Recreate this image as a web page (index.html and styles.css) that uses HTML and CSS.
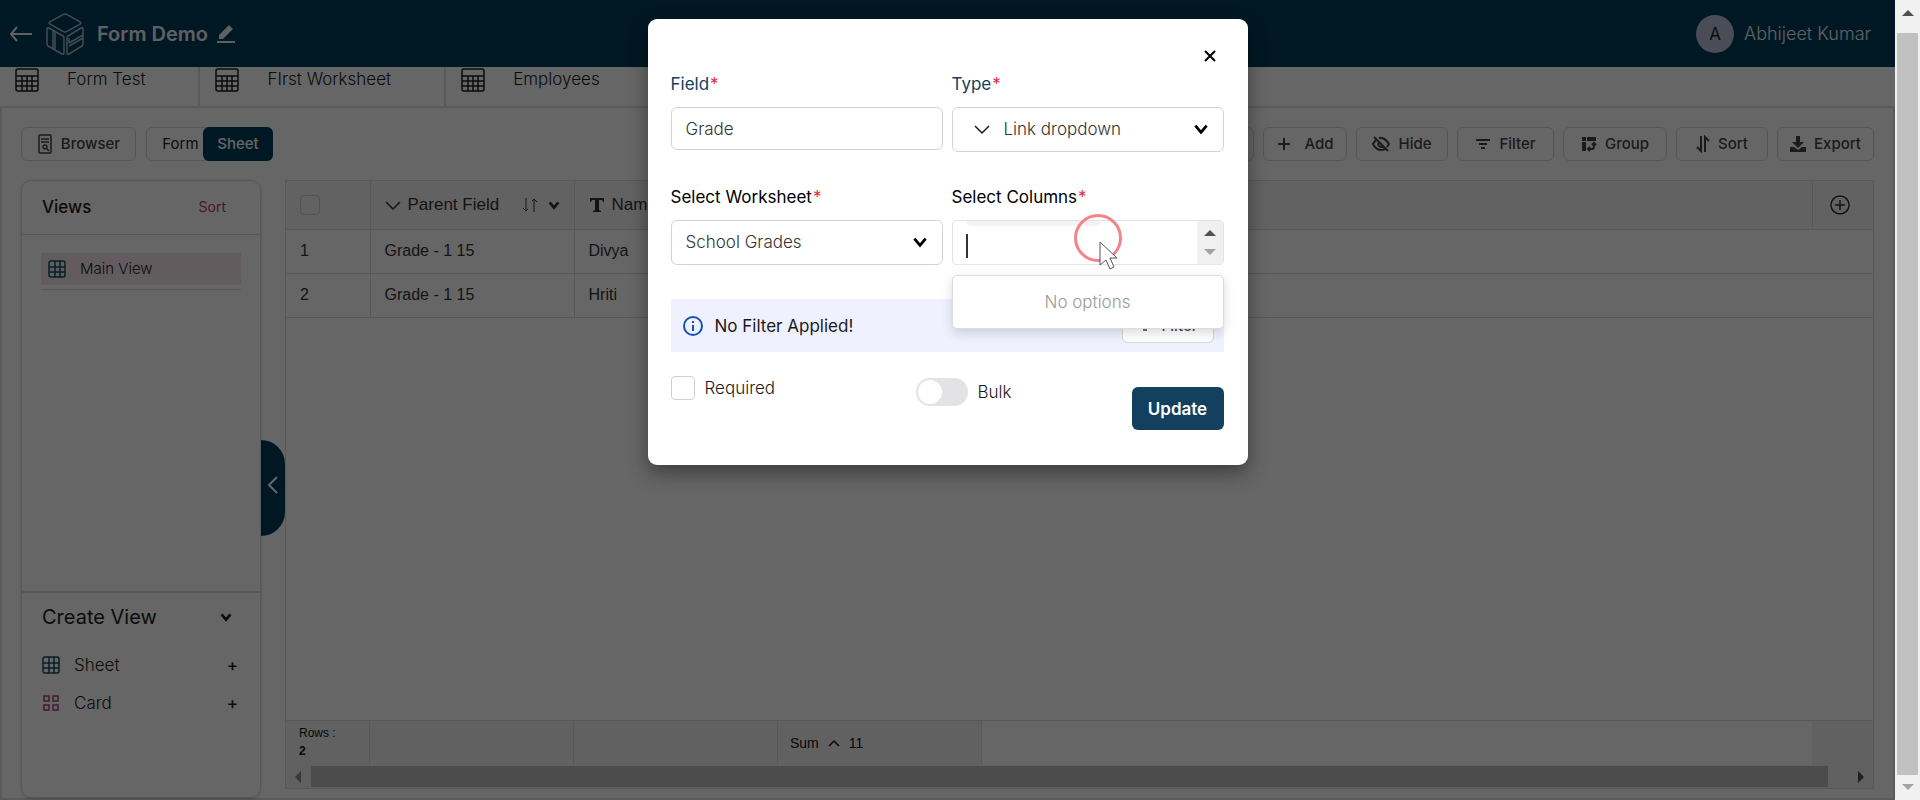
FILE: index.html
```html
<!DOCTYPE html>
<html lang="en">
<head>
  <meta charset="utf-8">
  <title>Form Demo</title>
  <link rel="stylesheet" href="styles.css">
</head>
<body>
  <!-- shared icons -->
  <svg class="sprite" aria-hidden="true">
    <symbol id="i-table" viewBox="0 0 24 24"><path d="M3 1h18a2 2 0 0 1 2 2v18a2 2 0 0 1-2 2H3a2 2 0 0 1-2-2V3a2 2 0 0 1 2-2zM1 8h22M1 13h22M1 18h22M7 8v15M12 8v15M17 8v15"/></symbol>
    <symbol id="i-grid" viewBox="0 0 18 18"><path d="M3 1h12a2 2 0 0 1 2 2v12a2 2 0 0 1-2 2H3a2 2 0 0 1-2-2V3a2 2 0 0 1 2-2zM1 7h16M1 12h16M7 1v16M12 1v16"/></symbol>
    <symbol id="i-chev" viewBox="0 0 16 16"><path d="M3 5l5 6 5-6"/></symbol>
    <symbol id="i-wide" viewBox="0 0 16 16"><path d="M1 5l7 7 7-7"/></symbol>
    <symbol id="i-filter" viewBox="0 0 16 16"><path d="M1 4h14M4 8h8M6 12h4"/></symbol>
  </svg>

  <div class="window">
    <div class="page">
      <header class="topbar">
        <button class="icon-btn" aria-label="Back"><svg width="24" height="20" viewBox="0 0 24 20"><path d="M8 3l-6 7 6 7M2 10h21"/></svg></button>
        <svg class="logo" width="40" height="44" viewBox="0 0 40 44"><path d="M20 2q1 0 2 .6l13 7.200q2 1.200 0 2.400l-13 7.200q-2 1-4 0L5 12.200q-2-1.200 0-2.400l13-7.200q1-.6 2-.6zM4 16l14 8q1 .6 1 2v15q0 2-2 1L3 34q-1-.6-1-2V17q0-2 2-1zM8 18v18M10 20v18M36 16l-13 8q-1 .6-1 2v15q0 2 2 1l13-8q1-.6 1-2V17q0-2-2-1zM24 31l14-8M24 34l14-8M24 31V26"/></svg>
        <h1 class="title">Form Demo</h1>
        <button class="icon-btn" aria-label="Rename"><svg width="20" height="20" viewBox="0 0 20 20"><path class="fill" d="M3 15V11L13 1l4 4L7 15z"/><path d="M1 18h18"/></svg></button>
        <div class="user"><span class="avatar">A</span><span>Abhijeet Kumar</span></div>
      </header>

      <nav class="tabs">
        <a class="tab" href="#"><svg width="24" height="24"><use href="#i-table"/></svg>Form Test</a>
        <a class="tab" href="#"><svg width="24" height="24"><use href="#i-table"/></svg>FIrst Worksheet</a>
        <a class="tab" href="#"><svg width="24" height="24"><use href="#i-table"/></svg>Employees</a>
      </nav>

      <main class="content">
        <div class="toolbar">
          <button class="btn browser"><svg width="16" height="20" viewBox="0 0 16 20"><path d="M3 1h10q1 0 1 1v16q0 1-1 1H3q-1 0-1-1V2q0-1 1-1zM4 5h8M4 8h8M10 15l2 2"/><circle cx="8" cy="13" r="2"/></svg>Browser</button>
          <div class="switcher"><button class="mode">Form</button><button class="mode active">Sheet</button></div>
          <div class="tools">
            <button class="btn search" aria-label="Search"></button>
            <button class="btn add"><svg width="16" height="16" viewBox="0 0 16 16"><path d="M8 2v12M2 8h12"/></svg>Add</button>
            <button class="btn hide"><svg width="18" height="16" viewBox="0 0 18 16"><path d="M4 4Q2 6 1 8q3 6 8 6 2 0 4-1M7 2q6-1 10 6l-2 3M2 1l14 14M7 6q-2 4 2 5 2 0 3-1"/></svg>Hide</button>
            <button class="btn filter"><svg width="16" height="16"><use href="#i-filter"/></svg>Filter</button>
            <button class="btn group"><svg width="16" height="16" viewBox="0 0 16 16"><path class="fill" d="M1 1h4v4H1zM6 1h9v4H6zM1 6h4v9H1z"/><path d="M8 13h3q2 0 2-3V7M11 9l2-2 2 2M9 11l-2 2 2 2"/></svg>Group</button>
            <button class="btn sort"><svg width="14" height="18" viewBox="0 0 14 18"><path d="M5 1v15l-4-4M9 17V2l4 4"/></svg>Sort</button>
            <button class="btn export"><svg width="16" height="18" viewBox="0 0 16 18"><path class="fill" d="M6 1h4v6h4l-6 6-6-6h4zM0 12h4l4 3 4-3h4v5H0z"/></svg>Export</button>
          </div>
        </div>

        <div class="workspace">
          <aside class="views">
            <div class="views-head"><h2>Views</h2><a href="#">Sort</a></div>
            <div class="view-item"><a href="#"><svg width="18" height="18"><use href="#i-grid"/></svg>Main View</a></div>
            <div class="create">
              <div class="create-head"><h2>Create View</h2><svg class="bold" width="14" height="14"><use href="#i-chev"/></svg></div>
              <button class="create-row teal"><svg width="18" height="18"><use href="#i-grid"/></svg>Sheet<span>+</span></button>
              <button class="create-row pink"><svg width="18" height="18" viewBox="0 0 18 18"><path d="M2 2h5v5H2zM11 2h5v5h-5zM2 11h5v5H2zM11 11h5v5h-5z"/></svg>Card<span>+</span></button>
            </div>
          </aside>
          <button class="collapse" aria-label="Collapse views"><svg width="12" height="18" viewBox="0 0 12 18"><path d="M10 1L2 9l8 8"/></svg></button>

          <section class="sheet">
            <table class="grid">
              <thead>
                <tr>
                  <th class="num"><input type="checkbox" class="check" aria-label="Select all rows"></th>
                  <th class="col"><div class="th"><svg width="16" height="16"><use href="#i-wide"/></svg><span>Parent Field</span><svg class="order" width="16" height="16" viewBox="0 0 16 16"><path d="M4 1v13l-3-3M4 14l2-2M12 15V2l-2 2M12 2l3 3"/></svg><svg class="bold" width="14" height="14"><use href="#i-chev"/></svg></div></th>
                  <th class="col"><div class="th"><svg width="16" height="16" viewBox="0 0 16 16"><path class="fill" d="M1 1h14v4h-1l-1-2h-3v10l2 1v1H4v-1l2-1V3H3L2 5H1z"/></svg><span>Name</span></div></th>
                  <th></th>
                  <th class="plus"><button class="icon-btn" aria-label="Add column"><svg width="22" height="22" viewBox="0 0 22 22"><circle cx="11" cy="11" r="9"/><path d="M11 6v10M6 11h10"/></svg></button></th>
                </tr>
              </thead>
              <tbody>
                <tr><td>1</td><td>Grade - 1 15</td><td>Divya</td><td colspan="2"></td></tr>
                <tr><td>2</td><td>Grade - 1 15</td><td>Hriti</td><td colspan="2"></td></tr>
              </tbody>
            </table>
            <div class="summary">
              <div class="rows">Rows :<b>2</b></div>
              <div class="sum"></div>
              <div class="sum"></div>
              <div class="sum">Sum <svg width="12" height="12" viewBox="0 0 12 12"><path d="M1 9l5-5 5 5"/></svg> 11</div>
              <div class="rest"></div>
              <div class="last"></div>
            </div>
            <div class="hscroll"><i class="arrow left"></i><div class="thumb"></div><i class="arrow right"></i></div>
          </section>
        </div>
      </main>

      <div class="overlay">
        <form class="modal" role="dialog" aria-label="Edit field">
          <button type="button" class="close" aria-label="Close"><svg width="12" height="12" viewBox="0 0 12 12"><path d="M1 1l10 10M11 1L1 11"/></svg></button>
          <div class="fields">
            <div class="field navy">
              <label for="name">Field<em>*</em></label>
              <input id="name" class="control" type="text" value="Grade">
            </div>
            <div class="field navy">
              <label for="type">Type<em>*</em></label>
              <div class="select">
                <svg class="lead" width="16" height="16"><use href="#i-wide"/></svg>
                <select id="type" class="control with-icon"><option>Link dropdown</option></select>
                <svg class="caret" width="18" height="18"><use href="#i-chev"/></svg>
              </div>
            </div>
            <div class="field">
              <label for="worksheet">Select Worksheet<em>*</em></label>
              <div class="select">
                <select id="worksheet" class="control"><option>School Grades</option></select>
                <svg class="caret" width="18" height="18"><use href="#i-chev"/></svg>
              </div>
            </div>
            <div class="field">
              <label for="columns">Select Columns<em>*</em></label>
              <div class="multi">
                <span class="chip-edge"></span>
                <span class="text-caret"></span>
                <input id="columns" type="text" role="combobox" aria-expanded="true">
                <div class="spinner"><i class="arrow up"></i><i class="arrow down"></i></div>
                <div class="menu">No options</div>
              </div>
            </div>
          </div>
          <div class="notice">
            <svg width="22" height="22" viewBox="0 0 22 22"><circle cx="11" cy="11" r="9"/><path d="M11 10v6M11 6v2"/></svg>
            <span>No Filter Applied!</span>
            <button type="button" class="btn notice-filter"><svg width="16" height="16"><use href="#i-filter"/></svg>Filter</button>
          </div>
          <div class="footer">
            <label class="required"><input type="checkbox" class="check">Required</label>
            <label class="bulk"><input type="checkbox" class="toggle">Bulk</label>
            <button type="submit" class="update">Update</button>
          </div>
          <span class="click-ring"></span>
          <svg class="pointer" width="20" height="30" viewBox="0 0 20 30"><path d="M1 1v23l6-5 4 9 4-2-4-9h7z"/></svg>
        </form>
      </div>
    </div>

    <div class="vscroll"><i class="arrow up"></i><div class="thumb"></div><i class="arrow down"></i></div>
  </div>
</body>
</html>
```

FILE: styles.css
```css
* {
  box-sizing: border-box;
}
body {
  margin: 0;
  font-family: Inter, "Open Sans", sans-serif;
  font-size: 17px;
  line-height: 24px;
  color: #1b1b1b;
  background: white;
}
h1, h2 {
  margin: 0;
  font-weight: 500;
}
a {
  color: inherit;
  text-decoration: none;
}
button, input, select {
  font: inherit;
  color: inherit;
  padding: 0;
  margin: 0;
}
button {
  border: none;
  background: none;
  cursor: pointer;
}
svg {
  flex: none;
  fill: none;
  stroke: currentColor;
  stroke-width: 1.5;
}
.fill {
  fill: currentColor;
  stroke: none;
}
.bold {
  stroke-width: 3;
}
.sprite {
  position: absolute;
  width: 0;
  height: 0;
}

.window {
  display: flex;
  height: 100vh;
  overflow: hidden;
}
.page {
  position: relative;
  flex: 1;
  display: flex;
  flex-direction: column;
  overflow: hidden;
}

/* header */
.topbar {
  display: flex;
  align-items: center;
  height: 67px;
  flex: none;
  padding: 0 24px 0 9px;
  background: #003c5a;
  color: #eef0f5;
}
.icon-btn {
  display: flex;
  align-items: center;
}
.topbar svg {
  stroke-width: 2;
}
.topbar .logo {
  margin: 0 12px;
  stroke-width: 1.5;
  color: #a9bccb;
}
.title {
  font-size: 20px;
  font-weight: 600;
  margin-right: 8px;
}
.user {
  display: flex;
  align-items: center;
  gap: 10px;
  margin-left: auto;
}
.user > span:last-child {
  font-size: 18px;
  font-weight: 300;
}
.avatar {
  width: 38px;
  height: 38px;
  border-radius: 50%;
  background: #b9c0da;
  color: #222;
  text-align: center;
  line-height: 38px;
}

.tabs {
  display: flex;
  height: 41px;
  flex: none;
  border-bottom: 2px solid #e2e2e2;
}
.tab {
  display: flex;
  gap: 28px;
  padding: 0 53px 0 15px;
  font-weight: 300;
  border-right: 2px solid #e2e2e2;
}
.tab svg {
  margin-top: 1px;
}
.tab:last-child {
  border-right: none;
}

/* toolbar */
.content {
  flex: 1;
  display: flex;
  flex-direction: column;
  padding: 19px 19px 0;
  border: 2px solid #e2e2e2;
  border-top: none;
}
.toolbar {
  display: flex;
  gap: 10px;
  margin-bottom: 19px;
}
.btn {
  display: flex;
  align-items: center;
  justify-content: center;
  gap: 8px;
  height: 34px;
  border: 1px solid #d4d8dd;
  border-radius: 6px;
  font-size: 15px;
  font-weight: 500;
  color: #444;
}
.browser {
  width: 115px;
}
.switcher {
  display: flex;
  width: 127px;
  border: 1px solid #d4d8dd;
  border-radius: 6px;
  font-size: 15px;
}
.mode {
  flex: 1;
  padding-left: 10px;
}
.mode.active {
  flex: none;
  width: 70px;
  margin: -1px;
  padding: 0;
  border-radius: 6px;
  background: #003c5a;
  color: white;
  font-weight: 500;
}
.tools {
  display: flex;
  gap: 9px;
  margin-left: auto;
}
.tools svg {
  stroke-width: 2;
}
.add, .search {
  width: 84px;
}
.add {
  gap: 12px;
}
.hide, .sort {
  width: 92px;
}
.filter, .export {
  width: 97px;
}
.group {
  width: 104px;
}

/* views panel */
.workspace {
  flex: 1;
  display: flex;
}
.views {
  display: flex;
  flex-direction: column;
  width: 240px;
  flex: none;
  border: 1px solid #dcdcdc;
  border-radius: 10px;
  box-shadow: 0 1px 3px rgba(0, 0, 0, 0.2);
}
.views-head {
  display: flex;
  justify-content: space-between;
  padding: 14px 34px 15px 20px;
  border-bottom: 1px solid #dcdcdc;
}
.views-head h2 {
  font-size: 17px;
}
.views-head a {
  font-size: 14px;
  color: #c4365f;
}
.view-item {
  margin: 18px 19px 0;
  padding-bottom: 4px;
  border-bottom: 1px solid #dcdcdc;
  font-size: 15px;
  font-weight: 300;
}
.view-item a {
  display: flex;
  align-items: center;
  gap: 14px;
  height: 32px;
  padding-left: 7px;
  background: #f6e6ec;
}
.view-item svg, .teal svg {
  color: #12515e;
}
.create {
  height: 206px;
  margin-top: auto;
  padding: 12px 20px 0;
  border-top: 2px solid #dcdcdc;
}
.create-head {
  display: flex;
  align-items: center;
  justify-content: space-between;
  padding-right: 7px;
  margin-bottom: 17px;
}
.create-head h2 {
  font-size: 20px;
  font-weight: 400;
}
.create-row {
  display: flex;
  align-items: center;
  width: 100%;
  height: 38px;
  gap: 14px;
  padding-right: 2px;
  font-weight: 300;
  color: #1b1b1b;
}
.create-row span {
  margin-left: auto;
  font-weight: 500;
}
.pink svg {
  color: #a8437a;
}
.collapse {
  align-self: flex-start;
  width: 24px;
  height: 96px;
  margin-top: 260px;
  flex: none;
  border-radius: 0 24px 24px 0;
  background: #003c5a;
  color: white;
}
.collapse svg {
  stroke-width: 2;
}

/* sheet */
.sheet {
  flex: 1;
  display: flex;
  flex-direction: column;
  margin-bottom: 9px;
  border: 1px solid #dcdcdc;
  font-family: "Liberation Sans", Arial, sans-serif;
  color: #333;
}
.grid {
  width: 100%;
  table-layout: fixed;
  border-collapse: collapse;
  font-size: 16px;
}
.grid th, .grid td {
  height: 44px;
  padding: 0 0 0 14px;
  border-bottom: 1px solid #dcdcdc;
  text-align: left;
}
.grid td:nth-child(-n+3), .grid .num, .grid .col {
  border-right: 1px solid #dcdcdc;
}
.grid th {
  height: 48px;
  background: #f5f5f5;
  font-size: 17px;
  font-weight: 400;
}
.grid .num {
  width: 84px;
}
.grid .col {
  width: 204px;
}
.grid .plus {
  width: 61px;
  padding-left: 16px;
  border-left: 1px solid #dcdcdc;
}
.th {
  display: flex;
  align-items: center;
  gap: 7px;
}
.th .order {
  margin: 0 2px 0 16px;
  stroke-width: 1;
}
.check {
  appearance: none;
  display: block;
  width: 20px;
  height: 20px;
  border: 1px solid #cfcfcf;
  border-radius: 4px;
}
.summary {
  display: flex;
  height: 45px;
  margin-top: auto;
  border-top: 1px solid #dcdcdc;
  font-size: 14px;
  color: #111;
}
.rows, .sum, .last {
  background: #f3f3f3;
  border-right: 1px solid #dcdcdc;
}
.rows {
  width: 84px;
  padding: 3px 0 0 13px;
  font-size: 12px;
  line-height: 18px;
}
.rows b {
  display: block;
}
.sum {
  display: flex;
  align-items: center;
  gap: 9px;
  width: 204px;
  padding-left: 12px;
}
.rest {
  flex: 1;
}
.last {
  width: 61px;
  border-right: none;
}
.hscroll {
  display: flex;
  align-items: center;
  height: 23px;
  padding: 0 9px;
  background: #f1f1f1;
}
.hscroll .thumb {
  flex: 1;
  height: 21px;
  margin: 0 30px 0 10px;
  background: #bfbfbf;
}
.arrow {
  border: 6px solid transparent;
}
.arrow.up {
  border-top: none;
  border-bottom-color: #505050;
}
.arrow.down {
  border-bottom: none;
  border-top-color: #a3a3a3;
}
.arrow.left {
  border-left: none;
  border-right-color: #8a8a8a;
}
.arrow.right {
  border-right: none;
  border-left-color: #505050;
}

/* window scrollbar */
.vscroll {
  display: flex;
  flex-direction: column;
  align-items: center;
  justify-content: space-between;
  width: 25px;
  padding: 10px 0;
  background: #f1f1f1;
}
.vscroll .thumb {
  flex: 1;
  width: 21px;
  margin: 17px 0 9px;
  background: #c1c1c1;
}

/* modal */
.overlay {
  position: absolute;
  inset: 0;
  display: flex;
  justify-content: center;
  align-items: flex-start;
  padding-top: 19px;
  background: rgba(0, 0, 0, 0.6);
}
.modal {
  position: relative;
  width: 600px;
  padding: 23px 24px 35px 23px;
  border-radius: 9px;
  background: white;
  box-shadow: 0 8px 20px rgba(0, 0, 0, 0.4);
}
.close {
  display: flex;
  margin: 8px 8px 10px auto;
  color: black;
}
.close svg {
  stroke-width: 2;
}
.fields {
  display: grid;
  grid-template-columns: minmax(0, 1fr) minmax(0, 1fr);
  gap: 33px 9px;
}
.field > label {
  display: block;
  margin-bottom: 11px;
  color: black;
}
.navy > label {
  color: #12405e;
}
.field em {
  font-style: normal;
  color: #e02b3c;
  margin-left: 1px;
}
.control {
  display: block;
  width: 100%;
  height: 45px;
  padding: 0 14px;
  border: 1px solid #cfd3d9;
  border-radius: 6px;
  background: white;
  color: #333;
  font-weight: 300;
  appearance: none;
  outline: none;
}
select.control {
  padding-bottom: 2px;
}
input.control {
  height: 43px;
}
.select, .multi {
  position: relative;
}
.control.with-icon {
  padding-left: 51px;
}
.lead {
  position: absolute;
  left: 22px;
  top: 14px;
}
.caret {
  position: absolute;
  right: 14px;
  top: 13px;
  color: black;
  stroke-width: 2.5;
}
.multi {
  display: flex;
  align-items: center;
  height: 45px;
  padding-left: 13px;
  border: 1px solid #e2e4e8;
  border-radius: 4px;
}
.multi input {
  flex: 1;
  min-width: 0;
  height: 30px;
  border: none;
  outline: none;
}
/* bottom edge of the chip scrolled out of view */
.chip-edge {
  position: absolute;
  top: 0;
  left: 13px;
  width: 135px;
  height: 5px;
  border-radius: 0 0 8px 8px;
  background: #f3f3f3;
}
.text-caret {
  width: 2px;
  height: 24px;
  margin-top: 6px;
  background: #333;
}
.spinner {
  display: flex;
  flex-direction: column;
  align-items: center;
  justify-content: space-between;
  width: 26px;
  height: 43px;
  padding: 9px 0;
  background: #f0f0f0;
}
.menu {
  position: absolute;
  z-index: 1;
  top: 54px;
  left: -1px;
  right: -1px;
  padding: 14px;
  border: 1px solid #dcdcdc;
  border-radius: 5px;
  background: white;
  box-shadow: 0 4px 11px rgba(0, 0, 0, 0.15);
  color: #999;
  font-weight: 300;
  text-align: center;
}
.notice {
  display: flex;
  align-items: center;
  gap: 11px;
  height: 53px;
  margin: 34px 0 24px;
  padding: 0 10px 0 11px;
  background: #eff1ff;
}
.notice > svg {
  color: #1552b5;
  stroke-width: 2;
}
.notice-filter {
  width: 92px;
  margin-left: auto;
  background: white;
}
.footer {
  display: flex;
  align-items: flex-start;
  font-weight: 300;
}
.required, .bulk {
  display: flex;
  align-items: center;
  gap: 10px;
}
.required {
  width: 245px;
}
.required .check {
  width: 24px;
  height: 24px;
}
.bulk {
  margin-top: 2px;
}
.toggle {
  appearance: none;
  width: 52px;
  height: 28px;
  padding: 2px;
  border-radius: 14px;
  background: #e3e3e6;
}
.toggle::before {
  content: "";
  display: block;
  width: 24px;
  height: 24px;
  border-radius: 50%;
  background: white;
}
.update {
  width: 92px;
  height: 43px;
  margin: 11px 0 0 auto;
  border-radius: 6px;
  background: #12405e;
  color: white;
  font-weight: 600;
}

/* click marker and pointer */
.click-ring {
  position: absolute;
  z-index: 2;
  left: 426px;
  top: 195px;
  width: 48px;
  height: 48px;
  border: 3px solid #f4848a;
  border-radius: 50%;
}
.pointer {
  position: absolute;
  z-index: 3;
  left: 451px;
  top: 222px;
  fill: white;
  stroke: #555;
  stroke-width: 1;
}
```
